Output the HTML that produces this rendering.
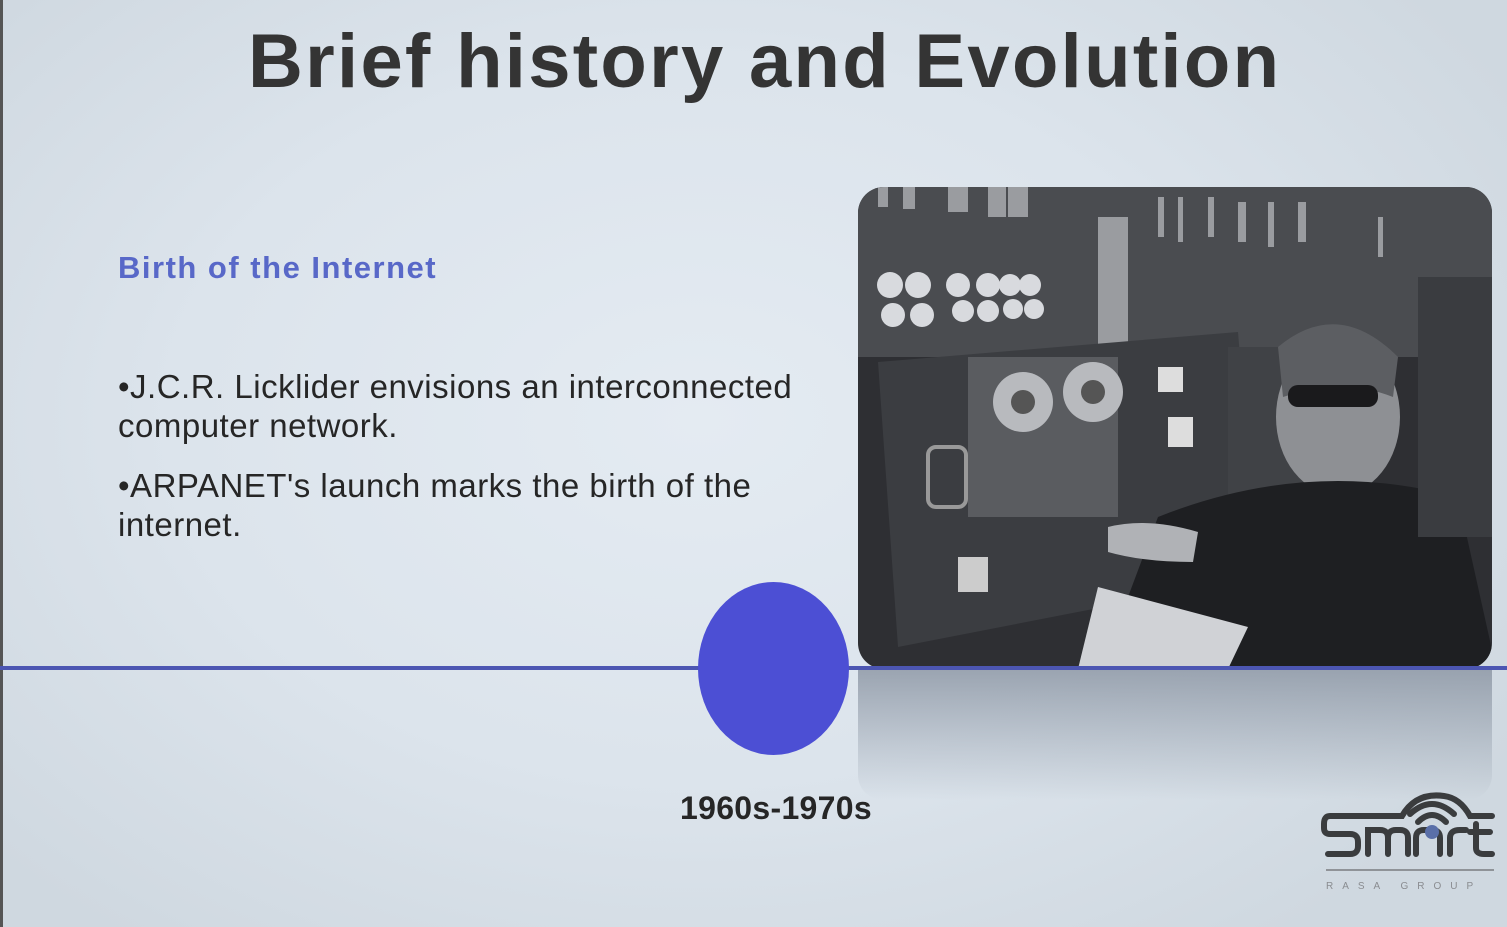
<!DOCTYPE html>
<html><head><meta charset="utf-8"><style>
html,body{margin:0;padding:0}
body{width:1507px;height:927px;overflow:hidden;position:relative;font-family:"Liberation Sans",sans-serif;
background:radial-gradient(ellipse 950px 650px at 700px 420px,#e4ebf2 0%,#dce4ec 55%,#cfd8e0 100%);}
.t{position:absolute;white-space:nowrap}
#title{left:248px;top:18px;font-size:76px;font-weight:bold;color:#343434;letter-spacing:2.3px}
#sub{left:118px;top:250px;font-size:31px;font-weight:bold;color:#5868c8;letter-spacing:1.5px}
.b{left:118px;font-size:33px;color:#262626;letter-spacing:0.5px}
#yr{left:680px;top:790px;font-size:32px;font-weight:bold;color:#262626;letter-spacing:0.3px}
</style></head><body>
<div style="position:absolute;left:0;top:0;width:3px;height:927px;background:#555"></div>
<div class="t" id="title">Brief history and Evolution</div>
<div class="t" id="sub">Birth of the Internet</div>
<div class="t b" style="top:368px">•J.C.R. Licklider envisions an interconnected</div>
<div class="t b" style="top:407px">computer network.</div>
<div class="t b" style="top:467px">•ARPANET's launch marks the birth of the</div>
<div class="t b" style="top:506px">internet.</div>

<div style="position:absolute;left:858px;top:670px;width:634px;height:130px;border-radius:0 0 25px 25px;background:linear-gradient(#8a94a2,rgba(200,208,218,0));opacity:.8"></div>

<svg style="position:absolute;left:858px;top:187px" width="634" height="482" viewBox="0 0 634 482">
<defs><clipPath id="c"><rect width="634" height="482" rx="26"/></clipPath></defs>
<g clip-path="url(#c)">
<rect width="634" height="482" fill="#2e2f33"/>
<rect x="0" y="0" width="634" height="170" fill="#4a4c50"/>
<g fill="#9a9ca0">
<rect x="20" y="0" width="10" height="20"/><rect x="45" y="0" width="12" height="22"/><rect x="90" y="0" width="20" height="25"/><rect x="130" y="0" width="18" height="30"/><rect x="150" y="0" width="20" height="30"/>
<rect x="300" y="10" width="6" height="40"/><rect x="320" y="10" width="5" height="45"/><rect x="350" y="10" width="6" height="40"/><rect x="380" y="15" width="8" height="40"/><rect x="410" y="15" width="6" height="45"/><rect x="440" y="15" width="8" height="40"/><rect x="520" y="30" width="5" height="40"/>
<rect x="240" y="30" width="30" height="130"/>
</g>
<g fill="#d8dade">
<circle cx="32" cy="98" r="13"/><circle cx="60" cy="98" r="13"/><circle cx="35" cy="128" r="12"/><circle cx="64" cy="128" r="12"/>
<circle cx="100" cy="98" r="12"/><circle cx="130" cy="98" r="12"/><circle cx="105" cy="124" r="11"/><circle cx="130" cy="124" r="11"/>
<circle cx="152" cy="98" r="11"/><circle cx="172" cy="98" r="11"/><circle cx="155" cy="122" r="10"/><circle cx="176" cy="122" r="10"/>
</g>
<polygon points="20,175 380,145 400,390 40,460" fill="#3b3d41"/>
<rect x="110" y="170" width="150" height="160" fill="#5a5c60"/>
<circle cx="165" cy="215" r="30" fill="#b8babe"/><circle cx="165" cy="215" r="12" fill="#555"/>
<circle cx="235" cy="205" r="30" fill="#b8babe"/><circle cx="235" cy="205" r="12" fill="#555"/>
<rect x="70" y="260" width="38" height="60" rx="8" fill="none" stroke="#999" stroke-width="4"/>
<rect x="100" y="370" width="30" height="35" fill="#ccc"/>
<rect x="300" y="180" width="25" height="25" fill="#ddd"/><rect x="310" y="230" width="25" height="30" fill="#ddd"/>
<rect x="370" y="160" width="80" height="200" fill="#404246"/>
<ellipse cx="480" cy="230" rx="62" ry="78" fill="#8e9094"/>
<path d="M420 160 q60 -50 120 10 l-5 40 q-50 -20 -110 0z" fill="#5c5e62"/>
<rect x="430" y="198" width="90" height="22" rx="10" fill="#1a1a1c"/>
<path d="M300 330 q150 -60 300 -20 l40 180 l-400 0z" fill="#1e1f22"/>
<polygon points="240,400 390,440 370,482 220,482" fill="#d0d2d6"/>
<path d="M250 340 q40 -10 90 5 l-5 30 q-50 0 -85 -10z" fill="#b0b2b6"/>
<rect x="560" y="90" width="74" height="260" fill="#3a3c40"/>
</g>
</svg>

<div style="position:absolute;left:0;top:666px;width:1507px;height:4px;background:#4c56b2"></div>
<div style="position:absolute;left:698px;top:582px;width:151px;height:173px;border-radius:50%;background:#4c4fd4"></div>
<div class="t" id="yr">1960s-1970s</div>

<svg style="position:absolute;left:1320px;top:788px" width="180" height="110" viewBox="0 0 180 110">
<g fill="none" stroke="#3a3c3e" stroke-width="6" stroke-linecap="round">
<path d="M68 28 H10 Q4 28 4 36 V40 Q4 46 10 46 H30 Q38 46 38 54 V58 Q38 66 30 66 H8"/>
<path d="M48 66 V42 H60 Q68 42 68 50 V66 M68 50 Q68 42 76 42 H80 Q88 42 88 50 V66"/>
<path d="M96 66 V50 Q96 42 104 42 H112 Q120 42 120 50 V66"/>
<path d="M130 66 V50 Q130 42 140 42 H146"/>
<path d="M156 36 V60 Q156 66 164 66 H172 M150 44 H170"/>
<path d="M90 26 Q112 6 134 26"/>
<path d="M98 34 Q112 20 126 34"/>
<path d="M68 28 H82 Q96 4 124 8 Q140 10 150 28 H172"/>
</g>
<circle cx="112" cy="44" r="7" fill="#5a6fa8"/>
<line x1="6" y1="82" x2="174" y2="82" stroke="#7a7c80" stroke-width="1.5"/>
<text x="6" y="101" font-family="Liberation Sans" font-size="10" fill="#8a8c90" letter-spacing="9">RASA GROUP</text>
</svg>
</body></html>
